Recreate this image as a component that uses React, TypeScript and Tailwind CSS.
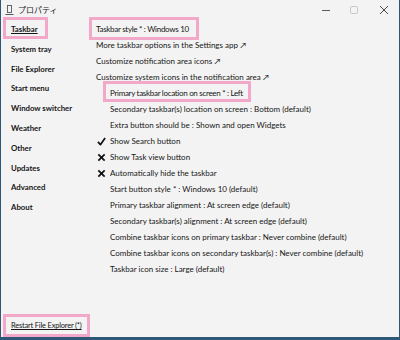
import type { ReactNode } from "react";

const FONT = { fontFamily: 'Lato, "Noto Sans CJK JP", sans-serif' };

const SIDE = [
  "Taskbar",
  "System tray",
  "File Explorer",
  "Start menu",
  "Window switcher",
  "Weather",
  "Other",
  "Updates",
  "Advanced",
  "About",
];

type Line = { text: string; indent?: boolean; mark?: "check" | "cross"; box?: boolean };

const LINES: Line[] = [
  { text: "Taskbar style * : Windows 10", box: true },
  { text: "More taskbar options in the Settings app \u2197" },
  { text: "Customize notification area icons \u2197" },
  { text: "Customize system icons in the notification area \u2197" },
  { text: "Primary taskbar location on screen * : Left", indent: true, box: true },
  { text: "Secondary taskbar(s) location on screen : Bottom (default)", indent: true },
  { text: "Extra button should be : Shown and open Widgets", indent: true },
  { text: "Show Search button", indent: true, mark: "check" },
  { text: "Show Task view button", indent: true, mark: "cross" },
  { text: "Automatically hide the taskbar", indent: true, mark: "cross" },
  { text: "Start button style * : Windows 10 (default)", indent: true },
  { text: "Primary taskbar alignment : At screen edge (default)", indent: true },
  { text: "Secondary taskbar(s) alignment : At screen edge (default)", indent: true },
  { text: "Combine taskbar icons on primary taskbar : Never combine (default)", indent: true },
  { text: "Combine taskbar icons on secondary taskbar(s) : Never combine (default)", indent: true },
  { text: "Taskbar icon size : Large (default)", indent: true },
];

function PinkBox({ className }: { className: string }) {
  return <span className={`pointer-events-none absolute border-[3px] border-[#f2a8c8] ${className}`} />;
}

function Mark({ kind }: { kind: "check" | "cross" }) {
  if (kind === "check") {
    return (
      <svg width="9" height="9" viewBox="0 0 10 10" className="absolute left-[-13px] top-[4px]">
        <path d="M1 5.5 L3.8 8.5 L9 1.2" fill="none" stroke="#111" strokeWidth="1.9" strokeLinejoin="round" />
      </svg>
    );
  }
  return (
    <svg width="9" height="9" viewBox="0 0 10 10" className="absolute left-[-13px] top-[4px]">
      <path d="M1.5 1.5 L8.5 8.5 M8.5 1.5 L1.5 8.5" stroke="#111" strokeWidth="1.9" />
    </svg>
  );
}

function Row({ line, first }: { line: Line; first: boolean }): ReactNode {
  return (
    <div
      className={`relative flex items-center text-[8px] text-[#161616] whitespace-nowrap ${
        first ? "h-[17px] pt-[1px]" : "h-[16px]"
      } ${line.indent ? "ml-[14px]" : ""}`}
    >
      {line.mark && <Mark kind={line.mark} />}
      <span className={`relative ${line.box ? "tracking-[-0.3px]" : ""}`}>
        {line.text}
        {line.box && first && <PinkBox className="left-[-7px] right-[-10px] top-[-6px] h-[23px]" />}
        {line.box && !first && <PinkBox className="left-[-7px] right-[-8px] top-[-6px] h-[21px]" />}
      </span>
    </div>
  );
}

export default function App() {
  return (
    <div
      className="w-[400px] h-[340px] bg-[#f3f3f3] border-l border-r border-b-[3px] border-[#2d5877] flex flex-col overflow-hidden"
      style={FONT}
    >
      {/* title bar */}
      <div className="h-[20px] flex items-center shrink-0">
        <svg width="9" height="11" viewBox="0 0 9 11" className="ml-[4px] mt-[1px]">
          <rect x="2.5" y="0.5" width="4" height="7" fill="none" stroke="#555" strokeWidth="0.9" />
          <path d="M0.5 9.5 H8.5" stroke="#555" strokeWidth="1" />
        </svg>
        <span className="ml-[4px] text-[8px] text-[#222]">プロパティ</span>
        <div className="ml-auto flex items-center h-full">
          <svg width="10" height="10" viewBox="0 0 10 10" className="mr-[18px]">
            <path d="M1 5.5 H9" stroke="#333" strokeWidth="0.8" />
          </svg>
          <svg width="10" height="10" viewBox="0 0 10 10" className="mr-[20px]">
            <rect x="1.5" y="1.5" width="7" height="7" rx="1" fill="none" stroke="#bbb" strokeWidth="0.8" />
          </svg>
          <svg width="10" height="10" viewBox="0 0 10 10" className="mr-[10px]">
            <path d="M1 1 L9 9 M9 1 L1 9" stroke="#333" strokeWidth="0.9" />
          </svg>
        </div>
      </div>

      <div className="flex flex-1 min-h-0">
        {/* sidebar */}
        <div className="w-[88px] shrink-0 flex flex-col">
          {SIDE.map((s, i) => (
            <div key={s} className="h-[19.8px] flex items-center pl-[10px]">
              <span
                className={`relative text-[7.8px] font-bold text-[#161616] whitespace-nowrap ${
                  i === 0 ? "underline underline-offset-[1px]" : ""
                }`}
              >
                {s}
                {i === 0 && <PinkBox className="left-[-8px] right-[-10px] top-[-7px] h-[22px]" />}
              </span>
            </div>
          ))}
          <div className="mt-auto mb-[3px] pl-[10px]">
            <span className="relative text-[7.5px] tracking-[-0.2px] text-[#161616] underline underline-offset-[1px] whitespace-nowrap">
              Restart File Explorer (*)
              <PinkBox className="left-[-8px] right-[-8px] top-[-7px] h-[23px]" />
            </span>
          </div>
        </div>

        {/* content */}
        <div className="flex flex-col pl-[7px]">
          {LINES.map((l, i) => (
            <Row key={i} line={l} first={i === 0} />
          ))}
        </div>
      </div>
    </div>
  );
}
